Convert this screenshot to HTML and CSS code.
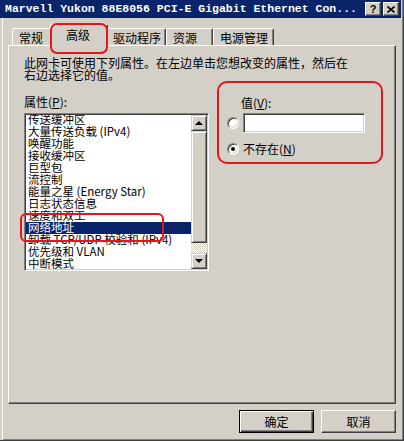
FILE: index.html
```html
<!DOCTYPE html>
<html lang="zh-CN">
<head>
  <meta charset="UTF-8">
  <title>Marvell Yukon 88E8056 属性</title>
  <link rel="stylesheet" href="styles.css">
</head>
<body>
  <div class="window">
    <div class="titlebar">
      <span class="title">Marvell Yukon 88E8056 PCI-E Gigabit Ethernet Con...</span>
      <div class="caption-buttons">
        <button class="caption-btn">?</button>
        <button class="caption-btn">
          <svg width="8" height="7" viewBox="0 0 8 7"><path d="M0.5 0.5 L7.5 6.5 M7.5 0.5 L0.5 6.5" stroke="#000" stroke-width="1.6"/></svg>
        </button>
      </div>
    </div>

    <div class="content">
      <div class="tabs">
        <div class="tab">常规</div>
        <div class="tab active">高级</div>
        <div class="tab">驱动程序</div>
        <div class="tab">资源</div>
        <div class="tab">电源管理</div>
      </div>

      <div class="panel">
        <p class="intro">此网卡可使用下列属性。在左边单击您想改变的属性，然后在<br>右边选择它的值。</p>

        <div class="columns">
          <div class="props">
            <label class="label">属性(<u>P</u>):</label>
            <div class="listbox">
              <ul class="items">
                <li>传送缓冲区</li>
                <li>大量传送负载 (IPv4)</li>
                <li>唤醒功能</li>
                <li>接收缓冲区</li>
                <li>巨型包</li>
                <li>流控制</li>
                <li>能量之星 (Energy Star)</li>
                <li>日志状态信息</li>
                <li>速度和双工</li>
                <li class="selected">网络地址</li>
                <li>卸载 TCP/UDP 校验和 (IPv4)</li>
                <li>优先级和 VLAN</li>
                <li>中断模式</li>
              </ul>
              <div class="scrollbar">
                <div class="sb-btn"><span class="arrow-up"></span></div>
                <div class="sb-thumb"></div>
                <div class="sb-track"></div>
                <div class="sb-btn"><span class="arrow-down"></span></div>
              </div>
            </div>
            <span class="mark mark-list"></span>
          </div>

          <div class="value-box">
            <div class="value-label">值(<u>V</u>):</div>
            <div class="option option-input">
              <span class="radio"></span>
              <span class="textbox"></span>
            </div>
            <div class="option option-none">
              <span class="radio checked"></span>
              <span>不存在(<u>N</u>)</span>
            </div>
          </div>
        </div>
      </div>

      <div class="footer">
        <button class="btn default">确定</button>
        <button class="btn">取消</button>
      </div>
    </div>
  </div>
</body>
</html>
```

FILE: styles.css
```css
/* Janela clássica */
body {
  margin: 0;
  background-color: #d4d0c8;
  font-family: "Noto Sans CJK SC", sans-serif;
  font-size: 12px;
  line-height: 12px;
  color: #000;
}

.window {
  width: 404px;
  height: 441px;
  box-sizing: border-box;
  display: flex;
  flex-direction: column;
  padding: 0 1px 7px 0;
  border-right: 1px solid #404040;
  border-bottom: 1px solid #404040;
  box-shadow: inset 2px 0 #d4d0c8, inset 3px 0 #fff, inset -1px -1px #808080;
}

/* Barra de título */
.titlebar {
  height: 18px;
  margin-right: 1px;
  display: flex;
  align-items: center;
  justify-content: space-between;
  background-color: #0a246a;
  color: #fff;
  padding: 0 2px 0 5px;
}

.title {
  font: bold 11.5px/18px "Liberation Mono", monospace;
  white-space: nowrap;
}

.caption-buttons {
  display: flex;
  gap: 2px;
}

.caption-btn {
  width: 16px;
  height: 14px;
  box-sizing: border-box;
  padding: 0;
  display: flex;
  align-items: center;
  justify-content: center;
  background-color: #d4d0c8;
  border: 1px solid;
  border-color: #fff #404040 #404040 #fff;
  box-shadow: inset -1px -1px #808080;
  color: #000;
  font: bold 11px/12px "Liberation Sans", sans-serif;
}

/* Conteúdo */
.content {
  flex: 1;
  display: flex;
  flex-direction: column;
  padding: 0 6px 0 8px;
}

/* Abas */
.tabs {
  display: flex;
  align-items: flex-end;
  height: 27px;
  padding-left: 4px;
}

.tab {
  height: 17px;
  box-sizing: border-box;
  padding: 3px 0 0 6px;
  background-color: #d4d0c8;
  border: 1px solid;
  border-bottom: 0;
  border-color: #fff #404040 transparent #fff;
  border-radius: 2px 2px 0 0;
  box-shadow: inset -1px 0 #808080;
  white-space: nowrap;
}

.tab:nth-child(1) { width: 40px; }
.tab:nth-child(2) { width: 58px; }
.tab:nth-child(3) { width: 60px; }
.tab:nth-child(4) { width: 47px; }
.tab:nth-child(5) { width: 61px; }

.tab.active {
  height: 22px;
  margin: 0 -2px -1px;
  padding: 4px 0 0 15px;
  position: relative;
  z-index: 1;
}

.tab.active::after {
  content: "";
  position: absolute;
  left: -1px;
  top: -2px;
  width: 58px;
  height: 31px;
  box-sizing: border-box;
  border: 2px solid #e3151d;
  border-radius: 7px;
}

/* Painel */
.panel {
  flex: 1;
  border: 1px solid;
  border-color: #fff #404040 #404040 #fff;
  box-shadow: inset -1px -1px #808080;
  padding: 11px 0 0 15px;
}

.intro {
  margin: 0;
}

.columns {
  display: flex;
  align-items: flex-start;
}

/* Lista de propriedades */
.props {
  width: 185px;
  padding-top: 15px;
  position: relative;
}

.label {
  display: block;
}

.listbox {
  margin-top: 5px;
  height: 158px;
  box-sizing: border-box;
  display: flex;
  padding: 1px;
  background-color: #fff;
  border: 1px solid;
  border-color: #808080 #fff #fff #808080;
  box-shadow: inset 1px 1px #404040, inset -1px -1px #d4d0c8;
}

.items {
  list-style: none;
  margin: -1px 0 0;
  padding: 0;
  flex: 1;
  overflow: hidden;
}

.items li {
  height: 12px;
  font-size: 11.5px;
  line-height: 11px;
  padding-left: 2px;
  white-space: nowrap;
}

.items li.selected {
  background-color: #0a246a;
  color: #fff;
}

.scrollbar {
  width: 16px;
  display: flex;
  flex-direction: column;
}

.sb-btn,
.sb-thumb {
  box-sizing: border-box;
  background-color: #d4d0c8;
  border: 1px solid;
  border-color: #d4d0c8 #404040 #404040 #d4d0c8;
  box-shadow: inset 1px 1px #fff, inset -1px -1px #808080;
}

.sb-btn {
  height: 16px;
  display: flex;
  align-items: center;
  justify-content: center;
}

.sb-thumb {
  height: 112px;
}

.sb-track {
  flex: 1;
  background: repeating-conic-gradient(#fff 0 25%, #d4d0c8 0 50%) 0 0 / 2px 2px;
}

.arrow-up,
.arrow-down {
  width: 0;
  height: 0;
  border-left: 4px solid transparent;
  border-right: 4px solid transparent;
}

.arrow-up {
  border-bottom: 4px solid #000;
}

.arrow-down {
  border-top: 4px solid #000;
}

/* Marcações vermelhas */
.mark {
  position: absolute;
  box-sizing: border-box;
  border: 2px solid #e3151d;
  border-radius: 6px;
}

.mark-list {
  left: -4px;
  top: 132px;
  width: 144px;
  height: 29px;
}

/* Valor */
.value-box {
  margin-left: 8px;
  width: 166px;
  height: 83px;
  box-sizing: border-box;
  border: 2px solid #e3151d;
  border-radius: 10px;
  padding: 14px 0 0 8px;
}

.value-label {
  padding-left: 14px;
}

.option {
  display: flex;
  align-items: center;
  gap: 4px;
}

.option-input {
  margin-top: 4px;
}

.option-none {
  margin-top: 10px;
}

.radio {
  width: 12px;
  height: 12px;
  box-sizing: border-box;
  display: flex;
  align-items: center;
  justify-content: center;
  border-radius: 50%;
  background-color: #fff;
  border: 1px solid;
  border-color: #808080 #fff #fff #808080;
  box-shadow: inset 1px 1px #404040, inset -1px -1px #d4d0c8;
}

.radio.checked::after {
  content: "";
  width: 4px;
  height: 4px;
  border-radius: 50%;
  background-color: #000;
}

.textbox {
  width: 122px;
  height: 20px;
  box-sizing: border-box;
  background-color: #fff;
  border: 1px solid;
  border-color: #808080 #fff #fff #808080;
  box-shadow: inset 1px 1px #404040, inset -1px -1px #d4d0c8;
}

/* Botões */
.footer {
  display: flex;
  justify-content: flex-end;
  gap: 7px;
  margin-top: 6px;
}

.btn {
  width: 75px;
  height: 23px;
  padding: 0;
  background-color: #d4d0c8;
  font-family: "Noto Sans CJK SC", sans-serif;
  font-size: 12px;
  color: #000;
  border: 1px solid;
  border-color: #fff #404040 #404040 #fff;
  box-shadow: inset -1px -1px #808080;
}

.btn.default {
  border-color: #000;
  box-shadow: inset 1px 1px #fff, inset -1px -1px #404040, inset -2px -2px #808080;
}
```
